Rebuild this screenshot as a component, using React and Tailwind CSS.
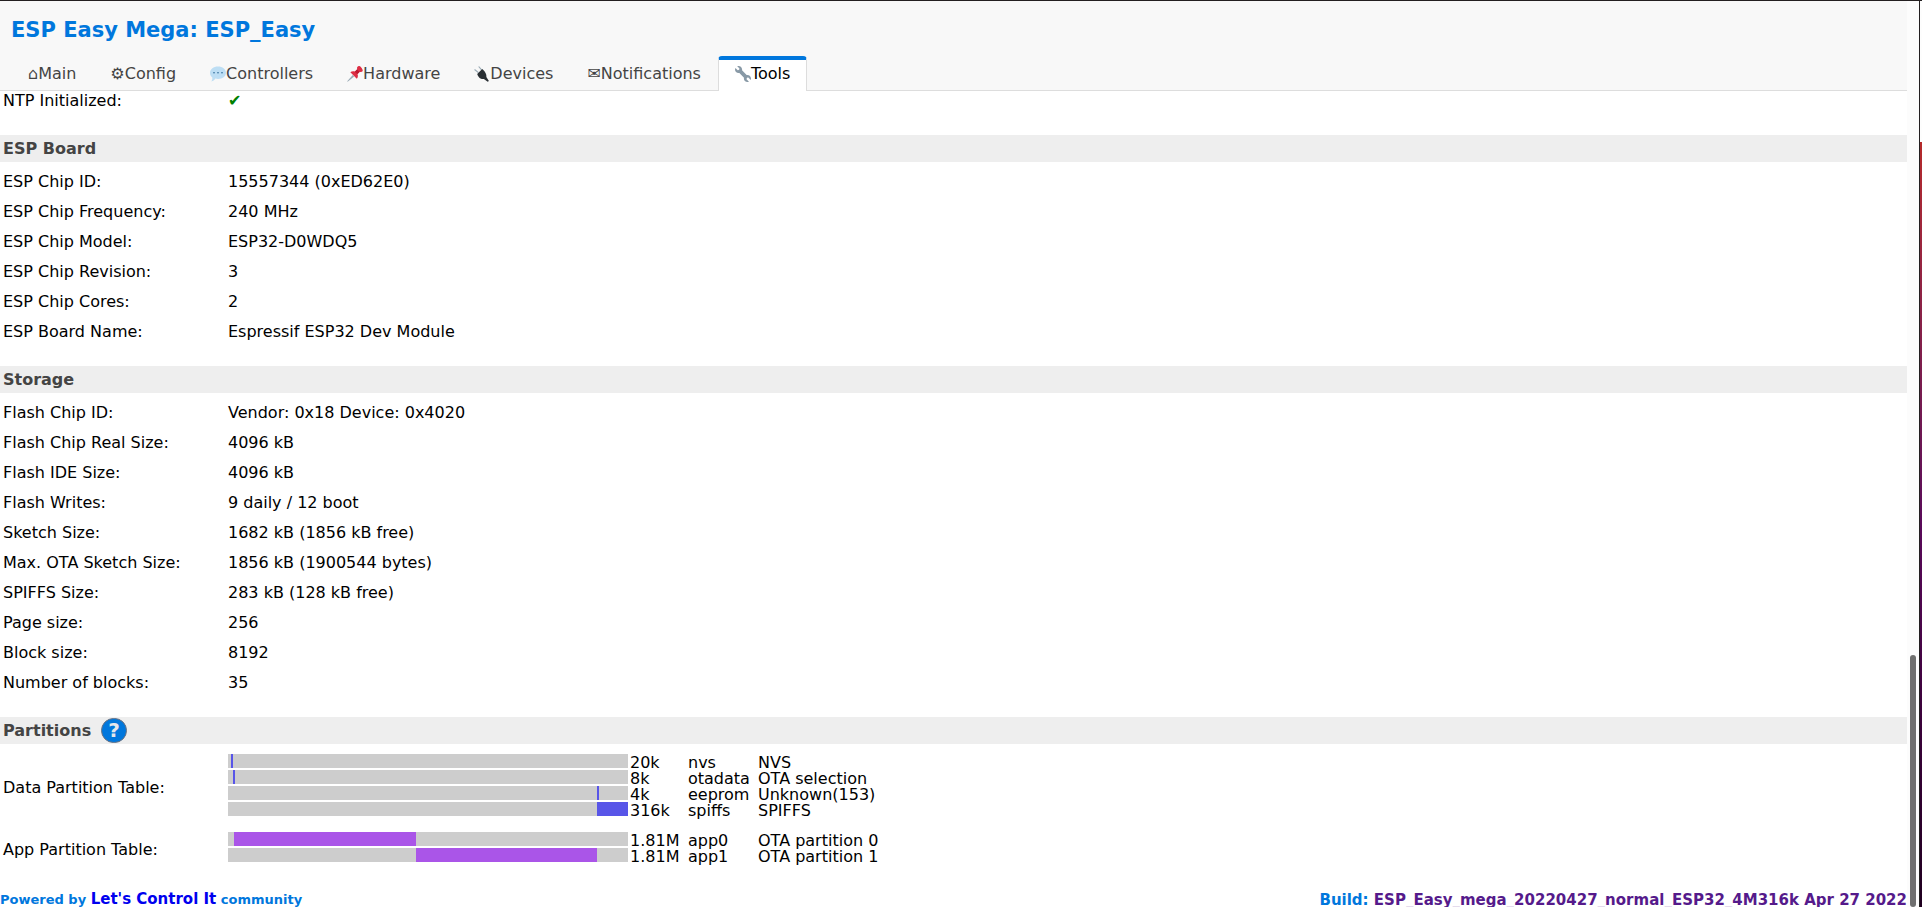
import React from "react";

const tabs = [
  { label: "Main", icon: "⌂" },
  { label: "Config", icon: "⚙" },
  { label: "Controllers", icon: <ChatIcon /> },
  { label: "Hardware", icon: <PinIcon /> },
  { label: "Devices", icon: <PlugIcon /> },
  { label: "Notifications", icon: "✉" },
  { label: "Tools", icon: <WrenchIcon />, active: true },
];

const boardRows = [
  ["ESP Chip ID:", "15557344 (0xED62E0)"],
  ["ESP Chip Frequency:", "240 MHz"],
  ["ESP Chip Model:", "ESP32-D0WDQ5"],
  ["ESP Chip Revision:", "3"],
  ["ESP Chip Cores:", "2"],
  ["ESP Board Name:", "Espressif ESP32 Dev Module"],
];

const storageRows = [
  ["Flash Chip ID:", "Vendor: 0x18 Device: 0x4020"],
  ["Flash Chip Real Size:", "4096 kB"],
  ["Flash IDE Size:", "4096 kB"],
  ["Flash Writes:", "9 daily / 12 boot"],
  ["Sketch Size:", "1682 kB (1856 kB free)"],
  ["Max. OTA Sketch Size:", "1856 kB (1900544 bytes)"],
  ["SPIFFS Size:", "283 kB (128 kB free)"],
  ["Page size:", "256"],
  ["Block size:", "8192"],
  ["Number of blocks:", "35"],
];

// start and width are percentages of the 4 MB flash
const dataPartitions = [
  { size: "20k", name: "nvs", type: "NVS", start: 0.85, width: 0.5 },
  { size: "8k", name: "otadata", type: "OTA selection", start: 1.35, width: 0.5 },
  { size: "4k", name: "eeprom", type: "Unknown(153)", start: 92.2, width: 0.5 },
  { size: "316k", name: "spiffs", type: "SPIFFS", start: 92.3, width: 7.7 },
];

const appPartitions = [
  { size: "1.81M", name: "app0", type: "OTA partition 0", start: 1.55, width: 45.35 },
  { size: "1.81M", name: "app1", type: "OTA partition 1", start: 46.9, width: 45.35 },
];

function ChatIcon() {
  return (
    <svg viewBox="0 0 16 16" className="h-4 w-4">
      <path d="M8 .5c4.400 0 8 2.700 8 6.200s-3.600 6.200-8 6.200c-.9 0-1.800-.1-2.600-.3C4.500 14 3 15.300 1.300 15.500c.9-1.100 1.200-2.500 1-4C.9 10.300 0 8.600 0 6.700 0 3.200 3.600.5 8 .5z" fill="#bddef4" />
      <circle cx="4" cy="6.800" r=".8" fill="#2a6797" />
      <circle cx="8" cy="6.800" r=".8" fill="#2a6797" />
      <circle cx="12" cy="6.800" r=".8" fill="#2a6797" />
    </svg>
  );
}

function PinIcon() {
  return (
    <svg viewBox="0 0 36 36" className="h-4 w-4">
      <path d="M13 20.500L16 23.500 1.500 35.500.500 34.500z" fill="#99aab5" />
      <path d="M23.700 1.500C25.700-.5 29-.3 32 3.500s4.500 7 2.500 9c-1.500 1.500-4 1.300-5.800.4l-5 5.200c1.500 3.800 1 8-1.700 10.500L7.500 14.100c2.700-2.600 6.600-3.200 10.400-1.700l5.200-5c-.9-1.900-.9-4.400.6-5.900z" fill="#dd2e44" />
      <path d="M17.900 12.400l5.200-5c1.200 2.500 3.200 4.400 5.600 5.500l-5 5.200c-2.500-1.200-4.600-3.200-5.800-5.700z" fill="#be1931" />
    </svg>
  );
}

function PlugIcon() {
  return (
    <svg viewBox="0 0 36 36" className="h-4 w-4">
      <path d="M.5 9L2 7l9 7-2 2zM9.500 1.500l2-1 8 9-2 2z" fill="#99aab5" />
      <path d="M18.500 6.500c4.300 3.400 7.500 7.500 9 13.200.4 1.800.5 3.500.3 5.100l5.700 9.200-2.700 1.500-8.600-6.200c-2 .4-4.200.2-6.500-.6-4.500-1.600-7-5.900-8.500-10.500z" fill="#292f33" />
    </svg>
  );
}

function WrenchIcon() {
  return (
    <svg viewBox="0 0 36 36" className="h-4 w-4">
      <path d="M27.989 19.977c-.622 0-1.225.078-1.806.213L15.811 9.818c.134-.581.212-1.184.212-1.806C16.023 3.587 12.436 0 8.012 0 7.110 0 5.910.2 5 .5l4.500 4.500c.7.700.5 2.500-.5 3.500s-2.800 1.200-3.500.5L1 4.500c-.4 1-.99 2.400-.99 3.500 0 4.425 3.587 8.012 8.012 8.012.622 0 1.225-.078 1.806-.212l10.371 10.371c-.135.581-.213 1.184-.213 1.806 0 4.425 3.588 8.011 8.012 8.011 1.100 0 2.400-.2 3.400-.6l-4.900-4.900c-.7-.7-.5-2.500.5-3.500s2.800-1.200 3.500-.5l4.900 4.900c.4-1 .602-2.300.602-3.411 0-4.424-3.587-8-8.011-8z" fill="#8899a6" />
    </svg>
  );
}

function SectionTitle({ children }) {
  return (
    <h2 className="flex h-[27px] items-center bg-[#eee] px-[3px] font-bold text-[#444]">
      {children}
    </h2>
  );
}

function InfoTable({ rows }) {
  return (
    <table className="mt-[5px] mb-[19px] w-full text-left">
      <tbody>
        {rows.map(([label, value]) => (
          <tr key={label} className="h-[30px]">
            <th scope="row" className="w-[228px] pl-[3px] font-normal">
              {label}
            </th>
            <td>{value}</td>
          </tr>
        ))}
      </tbody>
    </table>
  );
}

function PartitionRow({ label, partitions, color }) {
  return (
    <div className="flex items-center">
      <div className="w-[228px] pt-1 pl-[3px]">{label}</div>
      <div className="flex flex-col gap-0.5 pb-0.5">
        {partitions.map((p) => (
          <div key={p.name} className="flex h-[14px] items-center leading-4">
            <div className="h-full w-[400px] bg-[#cdcdcd]">
              <div
                className={`h-full ${color}`}
                style={{ marginLeft: `${p.start}%`, width: `${p.width}%` }}
              />
            </div>
            <div className="flex pt-1 pl-0.5">
              <span className="w-[58px]">{p.size}</span>
              <span className="w-[70px]">{p.name}</span>
              <span>{p.type}</span>
            </div>
          </div>
        ))}
      </div>
    </div>
  );
}

function App() {
  return (
    <div className="flex h-screen overflow-hidden border-t border-[#231f20] bg-white font-['DejaVu_Sans',sans-serif] text-base leading-[18px] text-black">
      <div className="min-w-0 flex-1">
        <header className="border-b border-[#ddd] bg-[#f8f8f8]">
          <h1 className="px-[11px] pt-4 pb-[13px] text-[21px] leading-[26px] font-bold text-[#0077dd]">
            ESP Easy Mega: ESP_Easy
          </h1>
          <nav className="-mb-px flex pl-[11px]">
            {tabs.map((tab) => (
              <a
                key={tab.label}
                href="#"
                className={`flex h-[35px] items-center rounded-t border-t-4 border-r border-l px-4 pb-[3px] ${
                  tab.active
                    ? "border-t-[#0077dd] border-r-[#ddd] border-l-[#ddd] bg-white text-black"
                    : "border-transparent text-[#444]"
                }`}
              >
                {tab.icon}
                {tab.label}
              </a>
            ))}
          </nav>
        </header>

        <main>
          <div className="mb-5 flex h-6 pl-[3px] leading-5">
            <div className="w-[225px]">NTP Initialized:</div>
            <div className="text-[green]">✔</div>
          </div>

          <SectionTitle>ESP Board</SectionTitle>
          <InfoTable rows={boardRows} />

          <SectionTitle>Storage</SectionTitle>
          <InfoTable rows={storageRows} />

          <SectionTitle>
            Partitions
            <button
              type="button"
              aria-label="Help"
              className="ml-2.5 flex h-[25px] w-[26px] items-center justify-center rounded-full border border-gray-500 bg-[#0077dd] pb-px text-xl font-bold text-gray-200"
            >
              ?
            </button>
          </SectionTitle>
          <div className="mt-2.5 mb-[25px] flex flex-col gap-3.5">
            <PartitionRow label="Data Partition Table:" partitions={dataPartitions} color="bg-[#5855e8]" />
            <PartitionRow label="App Partition Table:" partitions={appPartitions} color="bg-[#aa55e8]" />
          </div>
        </main>

        <footer className="flex items-start justify-between font-bold text-[#0077dd]">
          <div className="text-[13px] leading-5">
            Powered by{" "}
            <a href="#" className="text-[15px] text-[#0000ee]">
              Let's Control It
            </a>{" "}
            community
          </div>
          <div className="text-[15px] leading-[22px]">
            Build:{" "}
            <a href="#" className="text-[#551a8b]">
              ESP_Easy_mega_20220427_normal_ESP32_4M316k Apr 27 2022
            </a>
          </div>
        </footer>
      </div>

      {/* scrollbar */}
      <div className="flex w-3 flex-col items-center justify-end bg-[#fcfcfc]">
        <div className="h-[252px] w-1.5 rounded-full bg-[#6f6f6f]" />
      </div>

      {/* window edge with the desktop behind it */}
      <div className="w-px bg-[#231f20]" />
      <div className="flex w-0.5 flex-col">
        <div className="h-[141px] bg-[#fdfdfd]" />
        <div className="flex-1 bg-linear-to-b from-[#b52a2a] via-[#5a0a5a] to-[#200020]" />
      </div>
    </div>
  );
}

export default App;
